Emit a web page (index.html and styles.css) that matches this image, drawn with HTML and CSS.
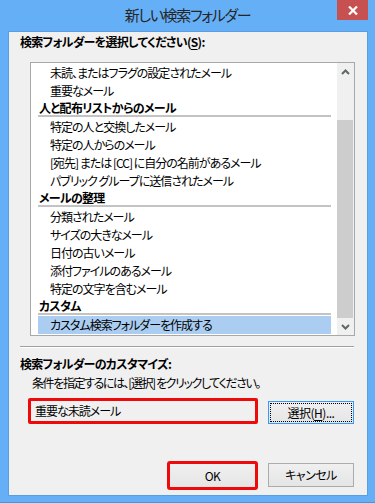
FILE: index.html
```html
<!DOCTYPE html>
<html lang="ja">
<head>
  <meta charset="UTF-8">
  <title>新しい検索フォルダー</title>
  <link rel="stylesheet" href="styles.css">
</head>
<body>
  <div class="window">
    <div class="titlebar">
      <span class="title">新しい検索フォルダー</span>
      <span class="close">
        <svg width="10" height="9" viewBox="0 0 10 9"><path d="M1 0.5 L9 8.5 M9 0.5 L1 8.5" stroke="#fff" stroke-width="2.2" fill="none"/></svg>
      </span>
    </div>

    <div class="client">
      <div class="label">検索フォルダーを選択してください(<u>S</u>):</div>

      <div class="listbox">
        <div class="rows">
          <div class="item">未読、またはフラグの設定されたメール</div>
          <div class="item">重要なメール</div>
          <div class="group">人と配布リストからのメール</div>
          <div class="item">特定の人と交換したメール</div>
          <div class="item">特定の人からのメール</div>
          <div class="item">[宛先] または [CC] に自分の名前があるメール</div>
          <div class="item">パブリック グループに送信されたメール</div>
          <div class="group">メールの整理</div>
          <div class="item">分類されたメール</div>
          <div class="item">サイズの大きなメール</div>
          <div class="item">日付の古いメール</div>
          <div class="item">添付ファイルのあるメール</div>
          <div class="item">特定の文字を含むメール</div>
          <div class="group">カスタム</div>
          <div class="item selected">カスタム検索フォルダーを作成する</div>
        </div>
        <div class="scrollbar">
          <div class="arrow">
            <svg width="9" height="6" viewBox="0 0 9 6"><path d="M1 5 L4.5 1.5 L8 5" stroke="#5f6a5f" stroke-width="2" fill="none"/></svg>
          </div>
          <div class="track"><div class="thumb"></div></div>
          <div class="arrow">
            <svg width="9" height="6" viewBox="0 0 9 6"><path d="M1 1 L4.5 4.5 L8 1" stroke="#5f6a5f" stroke-width="2" fill="none"/></svg>
          </div>
        </div>
      </div>

      <div class="rule"></div>

      <div class="label label-second">検索フォルダーのカスタマイズ:</div>
      <div class="hint">条件を指定するには、[選択] をクリックしてください。</div>

      <div class="criteria">
        <div class="criteria-box">重要な未読メール</div>
        <button class="btn btn-focus">選択(<u>H</u>)...</button>
      </div>

      <div class="actions">
        <div class="ok-mark"><button class="btn btn-ok">OK</button></div>
        <button class="btn btn-cancel">キャンセル</button>
      </div>
    </div>
  </div>
</body>
</html>
```

FILE: styles.css
```css
body {
  margin: 0;
  font-family: "Noto Sans CJK JP", "Noto Sans", sans-serif;
  font-feature-settings: "palt";
  font-size: 12px;
  letter-spacing: -1px;
  color: #000;
}

.window {
  width: 375px;
  height: 503px;
  background: #65aff7;
  border-bottom: 1px solid #4d93d8;
  box-sizing: border-box;
  display: flex;
  flex-direction: column;
}

.titlebar {
  height: 31px;
  flex-shrink: 0;
  display: flex;
  justify-content: center;
  align-items: center;
  position: relative;
}

.title {
  font-size: 15px;
  letter-spacing: -1.3px;
  color: #262626;
  line-height: 20px;
  margin-top: -2px;
}

.close {
  position: absolute;
  top: 0;
  right: 7px;
  width: 31px;
  height: 20px;
  background: #c75050;
  display: flex;
  align-items: center;
  justify-content: center;
}

.client {
  flex: 1;
  margin: 0 7px 6px 8px;
  background: #f0f0f0;
  border: 1px solid #5a9de2;
  display: flex;
  flex-direction: column;
}

.label {
  font-weight: bold;
  letter-spacing: -0.7px;
  line-height: 16px;
  padding: 2px 0 0 11px;
}

.label u,
.btn u {
  text-decoration-thickness: 1px;
  text-underline-offset: 2px;
}

.listbox {
  margin: 12px 0 0 21px;
  width: 325px;
  height: 274px;
  box-sizing: border-box;
  border: 1px solid #a8a8a8;
  background: #fff;
  display: flex;
}

.rows {
  flex: 1;
  padding: 1px 6px 0 7px;
  overflow: hidden;
}

.item {
  height: 18px;
  line-height: 18px;
  padding-left: 12px;
  white-space: nowrap;
}

.item.selected {
  background: #aacdf1;
}

.group {
  height: 15px;
  line-height: 15px;
  padding-left: 1px;
  font-weight: bold;
  letter-spacing: -0.7px;
  border-bottom: 2px solid #c3c3c3;
  margin-bottom: 1px;
}

.scrollbar {
  width: 17px;
  background: #f0f0f0;
  display: flex;
  flex-direction: column;
}

.arrow {
  height: 17px;
  display: flex;
  align-items: center;
  justify-content: center;
}

.track {
  flex: 1;
  padding: 40px 1px 0 0;
  display: flex;
}

.thumb {
  flex: 1;
  background: #cdcdcd;
}

.rule {
  margin: 10px 0 0 11px;
  width: 334px;
  height: 1px;
  background: #a0a0a0;
  border-bottom: 1px solid #fff;
}

.label-second {
  margin-top: 6px;
}

.hint {
  line-height: 16px;
  letter-spacing: -1.4px;
  margin: 3px 0 0 23px;
}

.criteria {
  display: flex;
  align-items: flex-start;
  gap: 10px;
  margin: 7px 0 0 19px;
}

.criteria-box {
  width: 230px;
  height: 26px;
  box-sizing: border-box;
  border: 3px solid #ee0a0a;
  border-radius: 2px;
  padding-left: 4px;
  line-height: 20px;
}

.btn {
  font: inherit;
  font-feature-settings: "palt";
  letter-spacing: -0.5px;
  color: #000;
  background: linear-gradient(#f0f0f0, #e5e5e5);
  border: 1px solid #acacac;
  padding: 0;
  box-sizing: border-box;
  line-height: 20px;
}

.btn-focus {
  width: 86px;
  height: 23px;
  margin-top: 3px;
  border-color: #3399ff;
  outline: 1px dotted #000;
  outline-offset: -3px;
}

.actions {
  display: flex;
  justify-content: flex-end;
  align-items: flex-start;
  gap: 10px;
  margin-top: 37px;
  padding-right: 13px;
}

.ok-mark {
  width: 91px;
  height: 29px;
  box-sizing: border-box;
  border: 3px solid #ee0a0a;
  border-radius: 3px;
  display: flex;
}

.btn-ok {
  flex: 1;
  border: none;
}

.btn-cancel {
  width: 86px;
  height: 24px;
  margin-top: 2px;
}
```
